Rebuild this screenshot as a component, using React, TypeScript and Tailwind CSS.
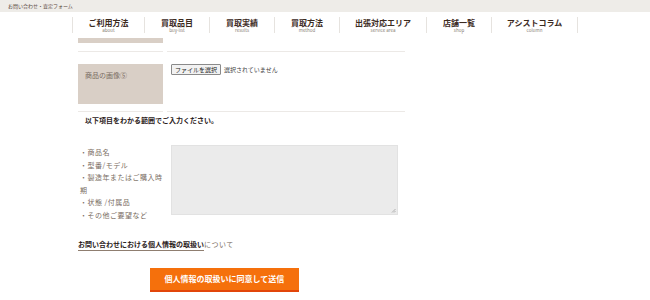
import React from "react";

const navItems = [
  { ja: "ご利用方法", en: "about", w: "w-[72px]" },
  { ja: "買取品目", en: "buy-list", w: "w-[65px]" },
  { ja: "買取実績", en: "results", w: "w-[65px]" },
  { ja: "買取方法", en: "method", w: "w-[65px]" },
  { ja: "出張対応エリア", en: "service area", w: "w-[87px]" },
  { ja: "店舗一覧", en: "shop", w: "w-[65px]" },
  { ja: "アシストコラム", en: "column", w: "w-[86px]" },
];

const listItems = ["・商品名", "・型番/モデル", "・製造年またはご購入時期", "・状態 /付属品", "・その他ご要望など"];

export default function App() {
  return (
    <div
      className="w-[650px] h-[300px] bg-white overflow-hidden text-[#3a2c22]"
      style={{ fontFamily: '"Noto Sans CJK JP", "Noto Sans", sans-serif' }}
    >
      {/* top bar */}
      <div className="h-[12px] bg-[#eeece8] flex items-center pl-[8px] text-[5px] text-[#5a4a3e]">
        お問い合わせ・査定フォーム
      </div>

      {/* nav */}
      <div className="flex justify-center pt-[5px]">
        <div className="flex border-l border-[#e6e3df]">
          {navItems.map((item) => (
            <div
              key={item.ja}
              className={`${item.w} h-[16px] border-r border-[#e6e3df] flex flex-col items-center justify-center`}
            >
              <span className="text-[8px] font-bold leading-[10px] text-[#3b2a1e] mt-[1px]">{item.ja}</span>
              <span className="text-[4.5px] leading-[5px] text-[#8a7f76]">{item.en}</span>
            </div>
          ))}
        </div>
      </div>

      {/* form */}
      <div className="w-[327px] ml-[78px] mt-[5px]">
        <div className="flex gap-[4px]">
          <div className="w-[85px] h-[5px] bg-[#d9cfc6]" />
          <div className="flex-1" />
        </div>
        <div className="flex gap-[4px] mt-[8px]">
          <div className="w-[85px] h-px bg-[#ece9e6]" />
          <div className="flex-1 h-px bg-[#ece9e6]" />
        </div>

        <div className="flex gap-[8px] mt-[12px]">
          <div className="w-[85px] h-[40px] bg-[#d9cfc6] pl-[7px] pt-[6px] text-[7px] text-[#7a6d63]">
            商品の画像⑤
          </div>
          <div className="flex items-start text-[6px]">
            <span className="border border-[#8a8a8a] bg-[#f2f2f2] rounded-[1px] px-[3px] h-[11px] flex items-center text-[#222]">
              ファイルを選択
            </span>
            <span className="ml-[3px] mt-[1px] text-[#444]">選択されていません</span>
          </div>
        </div>

        <div className="flex gap-[4px] mt-[7px]">
          <div className="w-[85px] h-px bg-[#ece9e6]" />
          <div className="flex-1 h-px bg-[#ece9e6]" />
        </div>

        <div className="pl-[7px] mt-[3px] text-[7px] font-bold leading-[10px] text-[#2a2019]">
          以下項目をわかる範囲でご入力ください。
        </div>

        <div className="flex mt-[20px]">
          <div className="w-[85px] pl-[2px] pt-[1px] text-[7px] leading-[12.5px] tracking-[0.5px] text-[#7a6d63]">
            {listItems.map((t) => (
              <div key={t}>{t}</div>
            ))}
          </div>
          <div className="w-[227px] h-[70px] ml-[8px] bg-[#ebebeb] border border-[#e2e2e2] relative">
            <svg className="absolute right-[1px] bottom-[1px]" width="5" height="5" viewBox="0 0 5 5">
              <path d="M4.5 1 L1 4.5 M4.5 3 L3 4.5" stroke="#888" strokeWidth="0.6" />
            </svg>
          </div>
        </div>

        <div className="mt-[18px] flex items-end text-[7px] leading-[10px]">
          <span className="font-bold text-[#2a2019] border-b border-[#8f7e70] pb-[1px]">
            お問い合わせにおける個人情報の取扱い
          </span>
          <span className="text-[#7a6d63] pb-[2px] tracking-[0.5px]">について</span>
        </div>

        <div className="mt-[17px] ml-[72px] w-[149px] h-[24px] bg-[#f5700c] border-b-[2px] border-[#e2460a] flex items-center justify-center text-white font-bold text-[8px]">
          個人情報の取扱いに同意して送信
        </div>
      </div>
    </div>
  );
}
